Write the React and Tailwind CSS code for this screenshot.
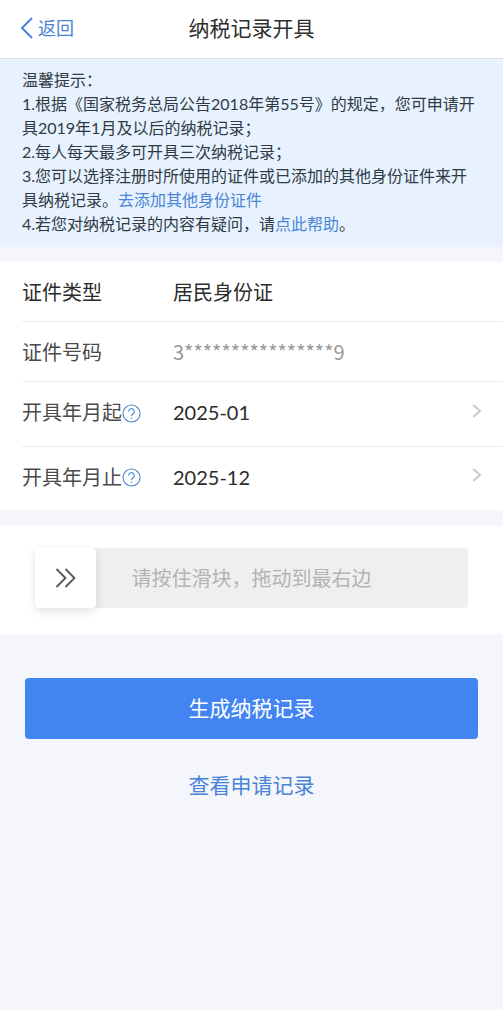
import React, { useState } from 'react';

const THUMB_WIDTH = 61;

const HelpIcon = () => (
  <svg className="size-[19px]" viewBox="0 0 19 19" fill="none" stroke="currentColor">
    <circle cx="9.5" cy="9.5" r="8.5" strokeWidth="1.2" />
    <path d="M6.7 7.5a2.8 2.8 0 1 1 4.4 2.2c-1 .8-1.6 1.2-1.6 2.4" strokeWidth="1.2" />
    <path d="M9.5 13.4v1.4" strokeWidth="1.3" />
  </svg>
);

const Chevron = () => (
  <svg className="mb-[3px] h-[14px] w-[10px] text-[#c9c9c9]" viewBox="0 0 10 14" fill="none" stroke="currentColor">
    <path d="M1.2 1l6.8 6-6.8 6" strokeWidth="2" />
  </svg>
);

const MonthRow = ({ id, label, value, last }) => (
  <div className={`flex items-center pr-[21px] pb-1 ${last ? 'h-[63px]' : 'h-[65px] border-b border-[#ececec]'}`}>
    <div className="flex w-[151px] shrink-0 items-center text-[#4b4b4b]">
      <label htmlFor={id}>{label}</label>
      <button type="button" aria-label="帮助" className="mt-[2px] text-[#5b8fd0]">
        <HelpIcon />
      </button>
    </div>
    <button id={id} type="button" className="flex flex-1 items-center justify-between text-left text-[#2b2b2b]">
      <span>{value}</span>
      <Chevron />
    </button>
  </div>
);

const SlideVerify = () => {
  const [position, setPosition] = useState(0);

  // Snap back unless the thumb reached the right edge
  const handleRelease = () => {
    if (position < 100) setPosition(0);
  };

  return (
    <div className="relative h-[60px] rounded bg-[#efefef]">
      <span className="pointer-events-none absolute inset-0 flex items-center justify-center text-xl text-[#b3b3b3]">
        请按住滑块，拖动到最右边
      </span>
      <input
        type="range"
        min="0"
        max="100"
        value={position}
        aria-label="请按住滑块，拖动到最右边"
        onChange={(e) => setPosition(Number(e.target.value))}
        onPointerUp={handleRelease}
        className="absolute inset-0 m-0 h-full w-full appearance-none bg-transparent outline-none [&::-webkit-slider-thumb]:h-[60px] [&::-webkit-slider-thumb]:w-[61px] [&::-webkit-slider-thumb]:appearance-none [&::-webkit-slider-thumb]:rounded [&::-webkit-slider-thumb]:bg-white [&::-webkit-slider-thumb]:shadow-[0_3px_10px_rgba(0,0,0,0.12)]"
      />
      <span
        className="pointer-events-none absolute inset-y-0 flex w-[61px] items-center justify-center text-[#555555]"
        style={{ left: `calc((100% - ${THUMB_WIDTH}px) * ${position / 100})` }}
      >
        <svg className="h-5 w-[22px]" viewBox="0 0 22 20" fill="none" stroke="currentColor" strokeWidth="1.8">
          <path d="M1.5 1l9 9-9 9M10.5 1l9 9-9 9" />
        </svg>
      </span>
    </div>
  );
};

const App = () => {
  return (
    <div className="min-h-screen border-b-[3px] border-white bg-[#f4f6fb] font-['Lato','Noto_Sans_CJK_SC',sans-serif] text-xl">
      <header className="grid h-[59px] grid-cols-[1fr_auto_1fr] items-center border-b border-[#d6dfe7] bg-white px-5 pb-[2px]">
        <a href="#" className="flex items-center gap-[5px] justify-self-start text-lg text-[#4a84d4]">
          <svg className="h-[22px] w-[13px]" viewBox="0 0 13 22" fill="none" stroke="currentColor" strokeWidth="2">
            <path d="M12 1L2 11l10 10" />
          </svg>
          返回
        </a>
        <h1 className="text-[21px] text-[#2f2f2f]">纳税记录开具</h1>
      </header>

      <section className="bg-[#e7f2fe] px-[22px] pt-[9px] pb-[11px] text-base leading-6 text-[#2f3a45]">
        <p>温馨提示：</p>
        <p>1.根据《国家税务总局公告2018年第55号》的规定，您可申请开具2019年1月及以后的纳税记录；</p>
        <p>2.每人每天最多可开具三次纳税记录；</p>
        <p>
          3.您可以选择注册时所使用的证件或已添加的其他身份证件来开具纳税记录。
          <a href="#" className="text-[#4a84d4]">去添加其他身份证件</a>
        </p>
        <p>
          4.若您对纳税记录的内容有疑问，请<a href="#" className="text-[#4a84d4]">点此帮助</a>。
        </p>
      </section>

      <section className="mt-[15px] bg-white pl-[22px]">
        <div className="flex h-[60px] items-center border-b border-[#ececec] text-[#2b2b2b]">
          <span className="w-[151px] shrink-0">证件类型</span>
          <span>居民身份证</span>
        </div>
        <div className="flex h-[60px] items-center border-b border-[#ececec]">
          <label htmlFor="id-number" className="w-[151px] shrink-0 text-[#4b4b4b]">证件号码</label>
          <input
            id="id-number"
            type="text"
            readOnly
            value="3****************9"
            className="min-w-0 flex-1 bg-transparent font-['Noto_Sans_CJK_SC',sans-serif] text-[#999999] outline-none"
          />
        </div>
        <MonthRow id="month-from" label="开具年月起" value="2025-01" />
        <MonthRow id="month-to" label="开具年月止" value="2025-12" last />
      </section>

      <section className="mt-4 bg-white px-[35px] pt-[22px] pb-[26px]">
        <SlideVerify />
      </section>

      <div className="flex flex-col items-center px-[25px] pt-11 text-[21px]">
        <button type="button" className="h-[61px] w-full rounded bg-[#4285f2] pb-[2px] text-white">
          生成纳税记录
        </button>
        <a href="#" className="mt-[30px] leading-8 text-[#4a84d4]">查看申请记录</a>
      </div>
    </div>
  );
};

export default App;
